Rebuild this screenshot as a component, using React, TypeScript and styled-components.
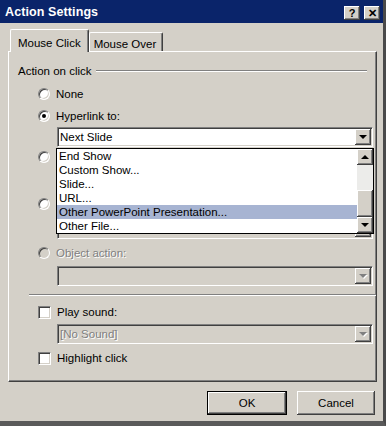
import React from 'react'
import styled, { createGlobalStyle } from 'styled-components'

const GlobalStyle = createGlobalStyle`
	html, body {
		margin: 0;
		padding: 0;
		background: #d4d0c8;
	}
	body {
		font-family: 'Liberation Sans', Arial, sans-serif;
	}
`

const raised = `
	box-shadow: inset -1px -1px #404040, inset 1px 1px #ffffff,
		inset -2px -2px #808080, inset 2px 2px #d4d0c8;
`

const sunken = `
	border: 1px solid;
	border-color: #808080 #ffffff #ffffff #808080;
	box-shadow: inset 1px 1px #404040, inset -1px -1px #d4d0c8;
`

const Window = styled.div`
	width: 386px;
	height: 426px;
	box-sizing: border-box;
	background: #d4d0c8;
	border-right: 3px solid #4a4a4a;
	border-bottom: 5px solid #5a5a5a;
	display: flex;
	flex-direction: column;
	font-size: 11.5px;
	color: #000;
`

const TitleBar = styled.div`
	height: 23px;
	flex: none;
	background: #0a246a;
	display: flex;
	align-items: center;
	justify-content: space-between;
	padding: 0 3px 0 5px;
`

const Title = styled.span`
	color: #fff;
	font-weight: bold;
	font-size: 12.5px;
	letter-spacing: 0.1px;
`

const CaptionButtons = styled.div`
	display: flex;
	gap: 4px;
	margin-top: 3px;
`

const CaptionButton = styled.div`
	width: 16px;
	height: 14px;
	background: #d4d0c8;
	${raised}
	display: flex;
	align-items: center;
	justify-content: center;
	font-weight: bold;
	font-size: 11px;
	line-height: 1;
`

const TabStrip = styled.div`
	display: flex;
	align-items: flex-end;
	height: 23px;
	margin: 5px 0 0 10px;
	position: relative;
	z-index: 1;
`

const Tab = styled.div<{ $active?: boolean }>`
	box-sizing: border-box;
	height: ${(p) => (p.$active ? 23 : 19)}px;
	margin-bottom: ${(p) => (p.$active ? -1 : 0)}px;
	padding: ${(p) => (p.$active ? '7px 7px 0 7px' : '5px 6px 0 4px')};
	background: #d4d0c8;
	border-left: 1px solid #fff;
	border-top: 1px solid #fff;
	border-right: 1px solid #404040;
	box-shadow: inset -1px 0 #808080;
	border-radius: 2px 2px 0 0;
	white-space: nowrap;
`

const Panel = styled.div`
	position: relative;
	box-sizing: border-box;
	width: 369px;
	height: 331px;
	margin-left: 8px;
	padding: 12px 0 0 9px;
	border-left: 1px solid #fff;
	border-top: 1px solid #fff;
	border-right: 1px solid #404040;
	border-bottom: 1px solid #404040;
	box-shadow: inset -1px -1px #808080;
	display: flex;
	flex-direction: column;
	align-items: flex-start;
`

const GroupHeader = styled.div`
	display: flex;
	align-items: center;
	width: 349px;
	height: 14px;
	gap: 4px;
`

const EtchedLine = styled.div`
	flex: 1;
	height: 0;
	border-top: 1px solid #808080;
	border-bottom: 1px solid #fff;
`

const OptionRow = styled.label<{ $mt: number }>`
	display: flex;
	align-items: center;
	gap: 6px;
	height: 20px;
	margin: ${(p) => p.$mt}px 0 0 20px;
`

const Radio = styled.span<{ $checked?: boolean; $disabled?: boolean }>`
	box-sizing: border-box;
	width: 12px;
	height: 12px;
	border-radius: 50%;
	background: ${(p) => (p.$disabled ? '#d4d0c8' : '#fff')};
	${sunken}
	display: flex;
	align-items: center;
	justify-content: center;
	&::after {
		content: '';
		display: ${(p) => (p.$checked ? 'block' : 'none')};
		width: 4px;
		height: 4px;
		border-radius: 50%;
		background: #000;
	}
`

const Check = styled.span`
	box-sizing: border-box;
	width: 13px;
	height: 13px;
	background: #fff;
	${sunken}
`

const OptionLabel = styled.span<{ $disabled?: boolean }>`
	color: ${(p) => (p.$disabled ? '#808080' : '#000')};
	text-shadow: ${(p) => (p.$disabled ? '1px 1px 0 #fff' : 'none')};
	white-space: nowrap;
`

const ComboWrap = styled.div<{ $mt: number }>`
	position: relative;
	margin: ${(p) => p.$mt}px 0 0 39px;
	width: 316px;
`

const Combo = styled.div<{ $disabled?: boolean }>`
	box-sizing: border-box;
	height: 20px;
	background: ${(p) => (p.$disabled ? '#d4d0c8' : '#fff')};
	${sunken}
	display: flex;
	align-items: center;
	justify-content: space-between;
	padding: 1px 1px 1px 2px;
	color: ${(p) => (p.$disabled ? '#808080' : '#000')};
	text-shadow: ${(p) => (p.$disabled ? '1px 1px 0 #fff' : 'none')};
`

const ArrowButton = styled.div`
	flex: none;
	box-sizing: border-box;
	width: 16px;
	height: 16px;
	background: #d4d0c8;
	${raised}
	display: flex;
	align-items: center;
	justify-content: center;
`

const Arrow = styled.span<{ $up?: boolean; $disabled?: boolean }>`
	width: 0;
	height: 0;
	border-left: 4px solid transparent;
	border-right: 4px solid transparent;
	${(p) =>
		p.$up
			? `border-bottom: 4px solid ${p.$disabled ? '#808080' : '#000'};`
			: `border-top: 4px solid ${p.$disabled ? '#808080' : '#000'};`}
	filter: ${(p) => (p.$disabled ? 'drop-shadow(1px 1px 0 #fff)' : 'none')};
`

const DropList = styled.div`
	position: absolute;
	left: -1px;
	top: 21px;
	width: 318px;
	height: 86px;
	box-sizing: border-box;
	border: 1px solid #000;
	background: #fff;
	display: flex;
	z-index: 2;
`

const ListItems = styled.div`
	flex: 1;
	display: flex;
	flex-direction: column;
`

const ListItem = styled.div<{ $selected?: boolean }>`
	height: 14px;
	line-height: 14px;
	padding-left: 2px;
	background: ${(p) => (p.$selected ? '#a7b4d2' : 'transparent')};
	white-space: nowrap;
`

const ScrollBar = styled.div`
	width: 16px;
	display: flex;
	flex-direction: column;
	background: #ececea;
`

const ScrollTrack = styled.div`
	flex: 1;
	display: flex;
	flex-direction: column;
	justify-content: flex-end;
`

const ScrollThumb = styled.div`
	height: 27px;
	background: #d4d0c8;
	${raised}
`

const Separator = styled.div<{ $mt: number }>`
	width: 347px;
	margin: ${(p) => p.$mt}px 0 0 11px;
	border-top: 1px solid #808080;
	border-bottom: 1px solid #fff;
`

const Footer = styled.div`
	display: flex;
	justify-content: flex-end;
	gap: 10px;
	padding: 9px 8px 0 0;
`

const DialogButton = styled.div<{ $default?: boolean }>`
	box-sizing: border-box;
	width: ${(p) => (p.$default ? 80 : 78)}px;
	height: 24px;
	background: #d4d0c8;
	display: flex;
	align-items: center;
	justify-content: center;
	border: ${(p) => (p.$default ? '1px solid #000' : 'none')};
	${raised}
`

const listItems = [
	'End Show',
	'Custom Show...',
	'Slide...',
	'URL...',
	'Other PowerPoint Presentation...',
	'Other File...',
]

function DropDown({
	value,
	disabled,
	mt,
	children,
}: {
	value?: string
	disabled?: boolean
	mt: number
	children?: React.ReactNode
}) {
	return (
		<ComboWrap $mt={mt}>
			<Combo $disabled={disabled}>
				<span>{value}</span>
				<ArrowButton>
					<Arrow $disabled={disabled} />
				</ArrowButton>
			</Combo>
			{children}
		</ComboWrap>
	)
}

export default function App() {
	return (
		<>
			<GlobalStyle />
			<Window>
				<TitleBar>
					<Title>Action Settings</Title>
					<CaptionButtons>
						<CaptionButton>?</CaptionButton>
						<CaptionButton>✕</CaptionButton>
					</CaptionButtons>
				</TitleBar>

				<TabStrip>
					<Tab $active>Mouse Click</Tab>
					<Tab>Mouse Over</Tab>
				</TabStrip>

				<Panel>
					<GroupHeader>
						<span>Action on click</span>
						<EtchedLine />
					</GroupHeader>

					<OptionRow $mt={6}>
						<Radio />
						<OptionLabel>None</OptionLabel>
					</OptionRow>
					<OptionRow $mt={2}>
						<Radio $checked />
						<OptionLabel>Hyperlink to:</OptionLabel>
					</OptionRow>
					<DropDown value='Next Slide' mt={1}>
						<DropList>
							<ListItems>
								{listItems.map((item) => (
									<ListItem
										key={item}
										$selected={item === 'Other PowerPoint Presentation...'}
									>
										{item}
									</ListItem>
								))}
							</ListItems>
							<ScrollBar>
								<ArrowButton>
									<Arrow $up />
								</ArrowButton>
								<ScrollTrack>
									<ScrollThumb />
								</ScrollTrack>
								<ArrowButton>
									<Arrow />
								</ArrowButton>
							</ScrollBar>
						</DropList>
					</DropDown>

					{/* run program / run macro rows sit under the open list */}
					<OptionRow $mt={0} aria-label='Run program'>
						<Radio />
					</OptionRow>
					<DropDown mt={3} />
					<OptionRow $mt={4} aria-label='Run macro'>
						<Radio />
					</OptionRow>
					<DropDown mt={5} disabled />

					<OptionRow $mt={4}>
						<Radio $disabled />
						<OptionLabel $disabled>Object action:</OptionLabel>
					</OptionRow>
					<DropDown mt={3} disabled />

					<Separator $mt={8} />

					<OptionRow $mt={6}>
						<Check />
						<OptionLabel>Play sound:</OptionLabel>
					</OptionRow>
					<DropDown value='[No Sound]' mt={2} disabled />
					<OptionRow $mt={4}>
						<Check />
						<OptionLabel>Highlight click</OptionLabel>
					</OptionRow>
				</Panel>

				<Footer>
					<DialogButton $default>OK</DialogButton>
					<DialogButton>Cancel</DialogButton>
				</Footer>
			</Window>
		</>
	)
}
